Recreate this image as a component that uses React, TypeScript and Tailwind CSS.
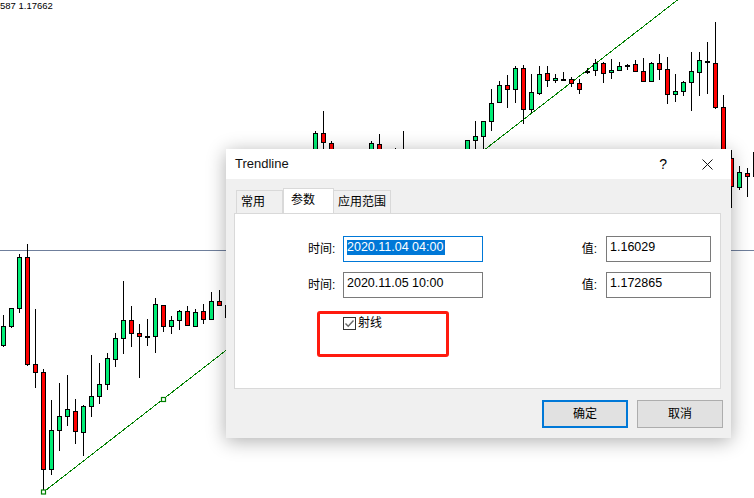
type Candle = [x: number, top: number, bottom: number, wickTop: number, wickBottom: number, kind: 'g' | 'r' | 'd'];

// 图表K线数据,x 为像素位置
const CANDLES: Candle[] = [
  [3, 326, 345, 315, 347, 'g'],
  [11, 308, 326, 308, 328, 'g'],
  [19, 257, 308, 254, 313, 'g'],
  [27, 257, 364, 244, 366, 'r'],
  [35, 364, 372, 309, 388, 'r'],
  [43, 372, 469, 369, 492, 'r'],
  [51, 430, 469, 400, 475, 'g'],
  [59, 416, 430, 383, 451, 'g'],
  [67, 409, 416, 375, 426, 'g'],
  [75, 411, 431, 399, 444, 'r'],
  [83, 406, 432, 405, 456, 'g'],
  [91, 396, 406, 355, 417, 'g'],
  [99, 384, 396, 363, 404, 'g'],
  [107, 358, 384, 353, 390, 'g'],
  [115, 338, 359, 333, 367, 'g'],
  [123, 320, 338, 281, 354, 'g'],
  [131, 320, 333, 306, 347, 'r'],
  [139, 333, 336, 324, 378, 'r'],
  [147, 336, 336, 319, 346, 'd'],
  [155, 304, 336, 298, 353, 'g'],
  [163, 305, 326, 305, 332, 'r'],
  [171, 320, 326, 316, 334, 'g'],
  [179, 311, 320, 310, 330, 'g'],
  [187, 311, 325, 306, 325, 'r'],
  [195, 312, 326, 309, 326, 'g'],
  [203, 311, 319, 304, 324, 'r'],
  [211, 301, 319, 292, 319, 'g'],
  [219, 301, 305, 290, 306, 'r'],
  [227, 305, 317, 300, 322, 'r'],
  [315, 133, 165, 131, 165, 'g'],
  [323, 133, 142, 111, 165, 'r'],
  [331, 143, 165, 141, 165, 'r'],
  [371, 143, 165, 141, 165, 'g'],
  [379, 144, 165, 134, 165, 'r'],
  [395, 165, 170, 148, 170, 'g'],
  [403, 165, 170, 131, 170, 'g'],
  [467, 140, 165, 140, 165, 'g'],
  [475, 136, 140, 121, 165, 'g'],
  [483, 121, 136, 121, 165, 'g'],
  [491, 103, 121, 89, 131, 'g'],
  [499, 85, 102, 81, 102, 'g'],
  [507, 85, 89, 75, 108, 'r'],
  [515, 68, 89, 66, 103, 'g'],
  [523, 68, 109, 65, 124, 'r'],
  [531, 92, 109, 74, 113, 'g'],
  [539, 74, 93, 66, 95, 'g'],
  [547, 73, 80, 66, 87, 'r'],
  [555, 78, 80, 74, 83, 'g'],
  [563, 79, 79, 72, 81, 'd'],
  [571, 79, 83, 77, 87, 'r'],
  [579, 83, 89, 79, 94, 'r'],
  [587, 71, 71, 68, 74, 'd'],
  [595, 63, 70, 59, 76, 'g'],
  [603, 63, 73, 62, 83, 'r'],
  [611, 70, 72, 59, 79, 'g'],
  [619, 66, 70, 62, 71, 'g'],
  [627, 65, 65, 64, 70, 'd'],
  [635, 64, 71, 60, 72, 'r'],
  [643, 71, 81, 58, 82, 'r'],
  [651, 63, 81, 62, 81, 'g'],
  [659, 63, 69, 54, 80, 'r'],
  [667, 69, 94, 57, 104, 'r'],
  [675, 91, 94, 74, 102, 'g'],
  [683, 82, 91, 81, 96, 'g'],
  [691, 71, 82, 52, 111, 'g'],
  [699, 60, 72, 52, 96, 'g'],
  [707, 61, 61, 42, 94, 'd'],
  [715, 63, 107, 22, 109, 'r'],
  [723, 107, 165, 95, 165, 'r'],
  [731, 158, 186, 150, 208, 'r'],
  [739, 172, 187, 166, 190, 'g'],
  [747, 173, 176, 168, 197, 'r'],
];

function Chart() {
  return (
    <svg className="absolute inset-0" width={754} height={498} viewBox="0 0 754 498">
      <line x1={0} y1={250.5} x2={754} y2={250.5} stroke="#6f7f9c" strokeWidth={1} />
      <line x1={43.5} y1={492} x2={677.5} y2={0} stroke="#008000" strokeWidth={1} shapeRendering="crispEdges" />
      <line x1={753.5} y1={152} x2={753.5} y2={177} stroke="#000" strokeWidth={1} />
      {CANDLES.map(([x, top, bottom, wickTop, wickBottom, kind]) => (
        <g key={x} shapeRendering="crispEdges">
          <line x1={x + 0.5} y1={wickTop} x2={x + 0.5} y2={wickBottom} stroke="#000" strokeWidth={1} />
          {kind === 'd' ? (
            <rect x={x - 2} y={top} width={5} height={2} fill="#000" />
          ) : (
            <rect
              x={x - 1.5}
              y={top + 0.5}
              width={4}
              height={bottom - top}
              fill={kind === 'g' ? '#00ee76' : '#ff0000'}
              stroke="#000"
              strokeWidth={1}
            />
          )}
        </g>
      ))}
      <rect x={41.5} y={490} width={4} height={4} fill="#fff" stroke="#008000" strokeWidth={1.2} />
      <rect x={161.5} y={397.5} width={4} height={4} fill="#fff" stroke="#008000" strokeWidth={1.2} />
    </svg>
  );
}

function Field({ value, selected, wide }: { value: string; selected?: boolean; wide?: boolean }) {
  return (
    <div
      className={`flex h-[26px] items-center border pb-[3px] pl-[3px] text-[12.5px] text-black ${wide ? 'w-[140px]' : 'w-[105px]'} ${
        selected ? 'border-[#0078d7]' : 'border-[#7a7a7a]'
      }`}
    >
      <span className={selected ? 'bg-[#0078d7] pr-[2px] leading-[15px] text-white' : 'leading-[15px]'}>{value}</span>
    </div>
  );
}

function Row({ date, price, selected }: { date: string; price: string; selected?: boolean }) {
  return (
    <div className="flex items-center">
      <span className="w-[28px] text-[12px]">时间:</span>
      <div className="ml-[7px]">
        <Field value={date} selected={selected} wide />
      </div>
      <span className="ml-auto text-[12px]">值:</span>
      <div className="ml-[9px]">
        <Field value={price} />
      </div>
    </div>
  );
}

function TrendlineDialog() {
  return (
    <div className="absolute left-[226px] top-[149px] flex h-[289px] w-[505px] flex-col bg-[#f0f0f0] shadow-[0_3px_18px_rgba(0,0,0,0.32)]">
      {/* 标题栏 */}
      <div className="flex h-[30px] shrink-0 items-center bg-white pl-[9px] pr-[18px]">
        <span className="text-[13px] text-[#111]">Trendline</span>
        <span className="ml-auto text-[14px] text-black">?</span>
        <svg className="ml-[35px]" width={11} height={11} viewBox="0 0 11 11">
          <path d="M0.5 0.5 L10.5 10.5 M10.5 0.5 L0.5 10.5" fill="none" stroke="#111" strokeWidth={1} />
        </svg>
      </div>

      {/* 选项卡 */}
      <div className="relative z-10 flex h-[34px] shrink-0 items-end pl-[10px]">
        <div className="flex h-[23px] w-[47px] items-center border border-b-0 border-[#d9d9d9] pl-[4px] text-[12px]">常用</div>
        <div className="flex h-[25px] w-[51px] items-center border border-b-0 border-[#d9d9d9] bg-white pb-[3px] pl-[7px] text-[12px]">参数</div>
        <div className="flex h-[23px] w-[57px] items-center justify-center border border-b-0 border-l-0 border-[#d9d9d9] text-[12px]">应用范围</div>
      </div>

      {/* 参数面板 */}
      <div className="ml-[8px] h-[176px] w-[487px] shrink-0 border border-[#d9d9d9] bg-white pl-[73px] pr-[9px] pt-[22px]">
        <div className="flex flex-col gap-[10px]">
          <Row date="2020.11.04 04:00" price="1.16029" selected />
          <Row date="2020.11.05 10:00" price="1.172865" />
        </div>
        <div className="ml-[35px] mt-[19px] flex items-center gap-[2px]">
          <div className="flex h-[13px] w-[13px] items-center justify-center border border-[#333]">
            <svg width={11} height={11} viewBox="0 0 11 11">
              <path d="M1.5 5.5 L4.2 8.2 L9.5 2.6" fill="none" stroke="#666" strokeWidth={1.4} />
            </svg>
          </div>
          <span className="text-[12px] leading-[13px]">射线</span>
        </div>
      </div>

      {/* 按钮 */}
      <div className="mr-[8px] mt-[11px] flex justify-end gap-[9px]">
        <div className="flex h-[28px] w-[86px] items-center justify-center border-2 border-[#0078d7] bg-[#e1e1e1] text-[12px]">确定</div>
        <div className="flex h-[28px] w-[86px] items-center justify-center border border-[#adadad] bg-[#e1e1e1] text-[12px]">取消</div>
      </div>
    </div>
  );
}

export default function App() {
  return (
    <div className="relative h-[498px] w-[754px] overflow-hidden bg-white font-['Liberation_Sans','Noto_Sans_CJK_SC',sans-serif] text-black">
      <Chart />
      <div className="absolute left-0 top-0 text-[9.5px] leading-[12px]">587 1.17662</div>
      <TrendlineDialog />
      {/* 红色标注框 */}
      <div className="absolute left-[317px] top-[311px] h-[46px] w-[132px] rounded-[3px] border-[3px] border-[#ff1a0e]" />
    </div>
  );
}
